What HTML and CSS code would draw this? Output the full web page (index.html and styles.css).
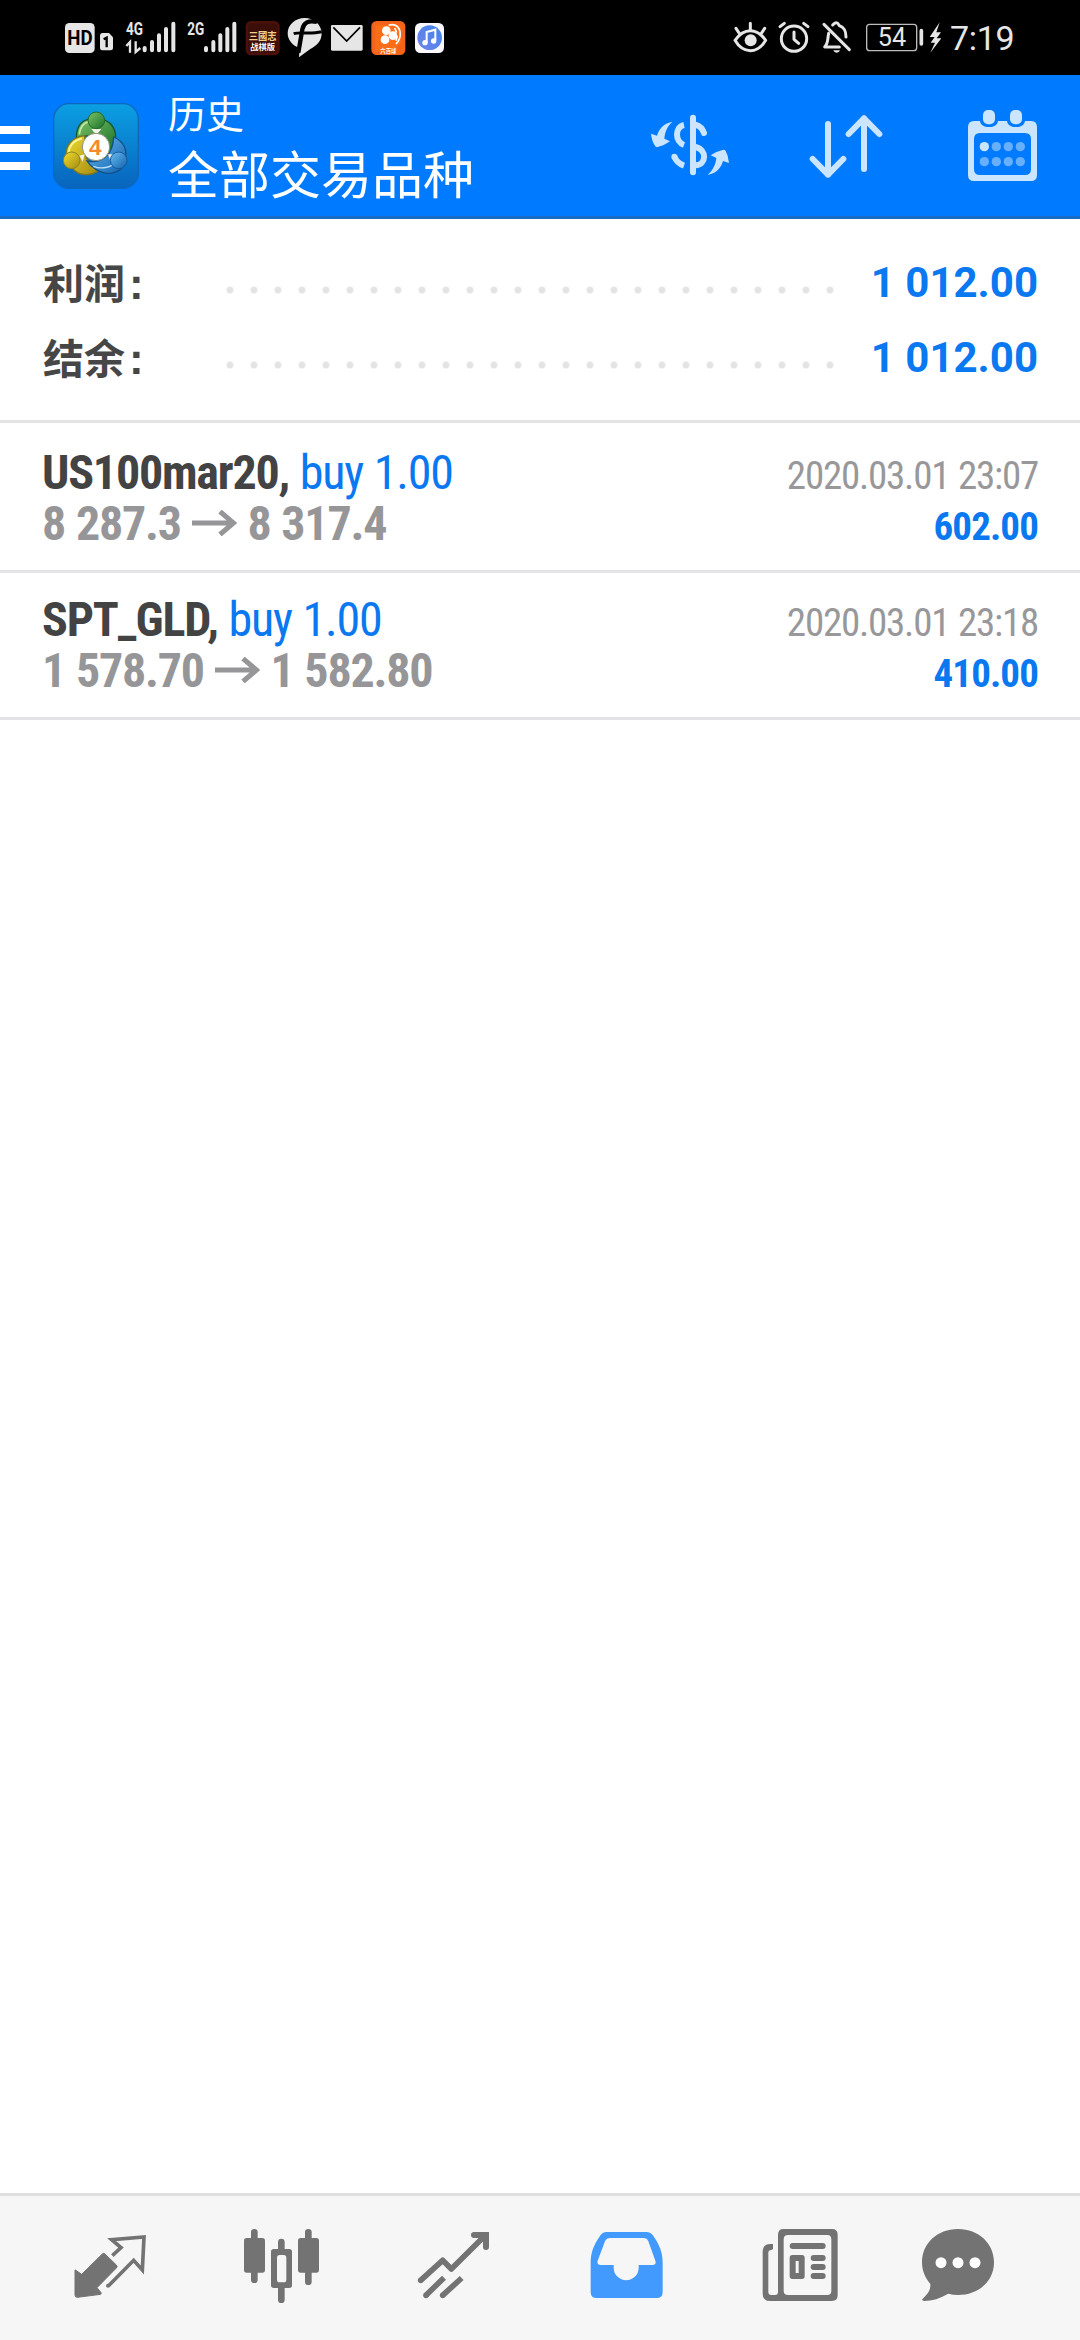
FILE: index.html
```
<!DOCTYPE html>
<html lang="zh-CN">
<head>
<meta charset="utf-8">
<title>历史</title>
<link rel="stylesheet" href="styles.css">
</head>
<body>
<div class="screen">
  <div class="status">
    <div class="status-left">
      <svg width="52" height="75" viewBox="45 0 156 225">
        <rect x="45" y="69" width="89" height="90" rx="13" fill="#e6e6e6"/>
        <text x="90" y="134" class="hd" textLength="76" lengthAdjust="spacingAndGlyphs">HD</text>
        <path d="M158 99h19l12 13v32q0 7-7 7h-25q-7 0-7-7v-37q0-8 8-8z" fill="#e6e6e6"/>
        <path d="M161 118l9-5v29" fill="none" stroke="#000" stroke-width="7"/>
      </svg>
      <svg width="60" height="75" viewBox="222 0 180 225">
        <text x="228" y="106" class="net" textLength="51" lengthAdjust="spacingAndGlyphs">4G</text>
        <path d="M240 158v-32l-11 12M257 124v32l14-12" fill="none" stroke="#e6e6e6" stroke-width="7"/>
        <path d="M284 144v7M306 126v25M327 106v45M348 87v64M370 71v80" class="bars"/>
      </svg>
      <svg width="57" height="75" viewBox="404 0 171 225">
        <text x="411" y="106" class="net" textLength="51" lengthAdjust="spacingAndGlyphs">2G</text>
        <path d="M467 144v7M489 126v25M510 106v45M531 87v64M552 71v80" class="bars"/>
      </svg>
      <svg width="36" height="75" viewBox="16 0 108 225">
        <rect x="18" y="63" width="102" height="103" rx="16" fill="#4c100b"/>
        <rect x="25" y="70" width="88" height="88" rx="12" fill="#3b0f08"/>
        <text x="69" y="119" class="game-a" textLength="84" lengthAdjust="spacingAndGlyphs">三國志</text>
        <text x="69" y="150" class="game-b" textLength="74" lengthAdjust="spacingAndGlyphs">战棋版</text>
      </svg>
      <svg width="37" height="75" viewBox="142 0 111 225">
        <path d="M195 54c28 0 51 21 51 46 0 24-16 38-34 47l-34 25 2-28c-21-6-36-24-36-44 0-26 23-46 51-46z" fill="#e6e6e6"/>
        <path d="M232 66c-26-6-40 2-44 22l-12 70" fill="none" stroke="#000" stroke-width="13"/>
        <path d="M162 101c20-6 50 2 84-6" fill="none" stroke="#000" stroke-width="9"/>
      </svg>
      <svg width="42" height="75" viewBox="262 0 126 225">
        <rect x="274" y="75" width="95" height="77" rx="4" fill="#e6e6e6"/>
        <path d="M281 82l40 41 40-41" fill="none" stroke="#000" stroke-width="5"/>
      </svg>
      <svg width="40" height="75" viewBox="392 0 120 225">
        <rect x="396" y="63" width="102" height="102" rx="16" fill="#f4631a"/>
        <path d="M408 76h78v54l-30 26h-48z" fill="#ff7a16" opacity=".5"/>
        <g fill="#fff"><circle cx="441" cy="92" r="13"/><circle cx="437" cy="119" r="13"/><circle cx="461" cy="107" r="13"/></g>
        <path d="M448 76q26-8 34 18 4 22-12 38M466 84l6 14M474 108l-4 14" fill="none" stroke="#fff" stroke-width="5"/>
        <text x="447" y="159" class="ball">六百球</text>
      </svg>
      <svg width="32" height="75" viewBox="524 0 96 225">
        <defs><linearGradient id="mus" x1="0" y1="1" x2="1" y2="0"><stop offset="0" stop-color="#7183e6"/><stop offset="1" stop-color="#3f86ef"/></linearGradient></defs>
        <rect x="527" y="69" width="87" height="90" rx="16" fill="#fbf8ff"/>
        <circle cx="571" cy="113" r="37" fill="url(#mus)"/>
        <path d="M562 128V96l26-7v32" fill="none" stroke="#fff" stroke-width="6"/>
        <circle cx="557" cy="128" r="8" fill="#fff"/><circle cx="583" cy="123" r="8" fill="#fff"/>
      </svg>
    </div>
    <div class="status-right">
      <svg width="42" height="75" viewBox="30 0 126 225">
        <path d="M45 121q20-29 46-29t46 29q-18 31-46 31t-46-31z" class="line"/>
        <circle cx="92" cy="121" r="18" fill="#e6e6e6"/>
        <path d="M91 70v20M48 85l10 15M134 85l-10 15" class="line"/>
      </svg>
      <svg width="42" height="75" viewBox="162 0 126 225">
        <circle cx="222" cy="116" r="38" class="line"/>
        <path d="M222 96v22l14 12M180 80l13-10M264 80l-13-10" class="line"/>
      </svg>
      <svg width="38" height="75" viewBox="292 0 114 225">
        <path d="M310 73l76 76M324 100c-4 16 0 28-12 41h44M336 75q12-14 20 2c16 6 20 16 20 34" class="line"/>
        <path d="M338 151h20q-2 7-10 7t-10-7z" fill="#e6e6e6"/>
      </svg>
      <svg width="79" height="75" viewBox="426 0 237 225">
        <rect x="440" y="73" width="150" height="79" rx="9" fill="none" stroke="#bdbdbd" stroke-width="4"/>
        <text x="516" y="138" class="batt" textLength="85" lengthAdjust="spacingAndGlyphs">54</text>
        <path d="M604 92v40" stroke="#e6e6e6" stroke-width="11" stroke-linecap="round"/>
        <path d="M659 67l-30 44h15l-12 17h13l-14 30 33-43h-14l13-18h-14z" fill="#e6e6e6"/>
      </svg>
      <span class="clock">7:19</span>
    </div>
  </div>

  <header class="header">
    <div class="menu"><i></i><i></i><i></i></div>
    <svg class="logo" width="86" height="86" viewBox="159 102 258 258">
      <defs>
        <linearGradient id="bg" x1="0" y1="0" x2="0" y2="1"><stop offset="0" stop-color="#0b9fe2"/><stop offset="1" stop-color="#0864bd"/></linearGradient>
        <linearGradient id="gr" x1="0" y1="0" x2="1" y2="1"><stop offset="0" stop-color="#7fc466"/><stop offset="1" stop-color="#177029"/></linearGradient>
        <linearGradient id="ye" x1="0" y1="0" x2="1" y2="1"><stop offset="0" stop-color="#f0de33"/><stop offset="1" stop-color="#a58a10"/></linearGradient>
        <linearGradient id="bl" x1="0" y1="0" x2="1" y2="1"><stop offset="0" stop-color="#6dbcf0"/><stop offset="1" stop-color="#0f62b0"/></linearGradient>
      </defs>
      <rect x="161" y="104" width="254" height="254" rx="46" fill="url(#bg)" stroke="#0d68bd" stroke-width="4"/>
      <path d="M229 206c0-40 20-58 58-58s60 24 60 58c0 20-8 34-18 42l-38-52z" fill="url(#gr)" stroke="#14592f" stroke-width="4"/>
      <path d="M238 196c2-22 12-34 28-38" fill="none" stroke="#c3e8ac" stroke-width="5"/>
      <path d="M254 200c-38 4-58 30-56 62l20 36c16 22 50 24 74 10l-34-42z" fill="url(#ye)" stroke="#7b7620" stroke-width="4"/>
      <path d="M246 208c-24 6-38 22-40 42" fill="none" stroke="#fbf59a" stroke-width="5"/>
      <path d="M341 204c32 14 42 40 34 74-6 32-46 42-74 30-18-8-32-20-40-32 38 8 78-12 80-72z" fill="url(#bl)" stroke="#12508a" stroke-width="4"/>
      <path d="M280 292c24 10 52 4 70-14" fill="none" stroke="#b4defa" stroke-width="4"/>
      <path d="M274 180h30l-15 18zM238 260l16-4-6 22zM324 256h16l-8 22z" fill="#f4f4e8"/>
      <circle cx="289" cy="154" r="25" fill="url(#gr)" stroke="#1f6c2c" stroke-width="3"/>
      <circle cx="215" cy="274" r="25" fill="url(#ye)" stroke="#8a8420" stroke-width="3"/>
      <circle cx="356" cy="274" r="25" fill="url(#bl)" stroke="#14599a" stroke-width="3"/>
      <circle cx="288" cy="234" r="41" fill="#fff" stroke="#8d8d78" stroke-width="3"/>
      <text x="286" y="259" class="four">4</text>
    </svg>
    <div class="titles">
      <div class="title">历史</div>
      <div class="subtitle">全部交易品种</div>
    </div>
    <svg class="tool" width="460" height="141" viewBox="0 -15 1380 423">
      <g fill="#cce5ff">
        <path d="M157 125c-28 6-40 22-46 42l-18-6q2 22 13 38 2 3 7 2 20-4 37-17l-17-8c2-20 8-36 24-51z"/>
        <path d="M263 285c28-6 40-22 46-42l18 6q-2-22-10-36-3-5-9-3-20 4-36 16l17 8c-2 20-10 36-26 51z"/>
        <circle cx="163" cy="230" r="9"/>
      </g>
      <g fill="none" stroke="#cce5ff" stroke-width="18">
        <path d="M219 113v164" stroke-linecap="round"/>
        <path d="M192 135c-28 6-28 50 0 60M163 230q8 20 29 27"/>
        <path d="M226 134q20 6 26 25" stroke-linecap="round"/>
        <path d="M226 201c36 8 34 54 0 55"/>
      </g>
      <g fill="none" stroke="#cce5ff" stroke-width="18" stroke-linecap="round" stroke-linejoin="round">
        <path d="M624 132v152M578 237l46 47 46-47M732 267V115M686 162l46-47 46 47"/>
      </g>
      <path fill="#cce5ff" fill-rule="evenodd" d="M1062 123h18c2 12 12 18 27 18s25-6 27-18h27c2 12 12 18 27 18s25-6 27-18h18q18 0 18 18v144q0 18-18 18h-171q-18 0-18-18V141q0-18 18-18zM1080 159q-18 0-18 18v90q0 18 18 18h135q18 0 18-18v-90q0-18-18-18z"/>
      <g fill="#cce5ff"><rect x="1089" y="90" width="36" height="43" rx="15"/><rect x="1170" y="90" width="36" height="43" rx="15"/><circle cx="1093" cy="200" r="14"/></g>
      <g fill="#66b0ff"><circle cx="1129" cy="200" r="14"/><circle cx="1165" cy="200" r="14"/><circle cx="1201" cy="200" r="14"/><circle cx="1093" cy="245" r="14"/><circle cx="1129" cy="245" r="14"/><circle cx="1165" cy="245" r="14"/><circle cx="1201" cy="245" r="14"/></g>
    </svg>
  </header>

  <section class="summary">
    <div class="sum-row"><span class="label">利润<b>:</b></span><span class="dots"></span><span class="total">1 012.00</span></div>
    <div class="sum-row"><span class="label">结余<b>:</b></span><span class="dots"></span><span class="total">1 012.00</span></div>
  </section>

  <main class="deals">
    <article class="deal">
      <div class="line1"><span class="deal-name"><b>US100mar20,</b> <em>buy 1.00</em></span><span class="time">2020.03.01 23:07</span></div>
      <div class="line2"><span class="prices">8 287.3 <svg width="45" height="26" viewBox="0 0 45 26"><path d="M0 13h41M28 1.500l13.500 11.500L28 24.500" /></svg> 8 317.4</span><span class="profit">602.00</span></div>
    </article>
    <article class="deal">
      <div class="line1"><span class="deal-name"><b>SPT_GLD,</b> <em>buy 1.00</em></span><span class="time">2020.03.01 23:18</span></div>
      <div class="line2"><span class="prices">1 578.70 <svg width="45" height="26" viewBox="0 0 45 26"><path d="M0 13h41M28 1.500l13.500 11.500L28 24.500" /></svg> 1 582.80</span><span class="profit">410.00</span></div>
    </article>
  </main>

  <nav class="nav">
    <svg viewBox="-48 48 516 432">
      <path d="M106 270l19 13 62-61q4-4 8 0l34 33q5 5 0 9l-58 59 13 16-2 4-70 9q-7 0-7-7v-75z" fill="#737373" stroke="#737373" stroke-width="3" stroke-linejoin="round"/>
      <path d="M217 227l26-24-28-24 97-8-5 99-26-29-76 77" fill="none" stroke="#737373" stroke-width="11"/><circle cx="204" cy="317" r="6" fill="#737373"/>
    </svg>
    <svg viewBox="468 48 516 432">
      <g fill="#737373"><rect x="612" y="174" width="63" height="104" rx="8"/><rect x="774" y="174" width="63" height="104" rx="8"/><rect x="633" y="147" width="20" height="162" rx="10"/><rect x="795" y="147" width="20" height="168" rx="10"/><rect x="714" y="176" width="20" height="40" rx="10"/><rect x="714" y="312" width="20" height="57" rx="10"/>
      <path fill-rule="evenodd" d="M701 207h47q8 0 8 8v101q0 8-8 8h-47q-8 0-8-8V215q0-8 8-8zM719 225q-8 0-8 8v66q0 8 8 8h12q8 0 8-8v-66q0-8-8-8z"/></g>
    </svg>
    <svg viewBox="-36 48 516 432">
      <g fill="none" stroke="#737373" stroke-width="17">
        <path d="M122 301l66-60 26 26L316 166" stroke-linejoin="round"/><path d="M282 165h36v36" stroke-width="18" stroke-linecap="round"/><path d="M138 346l54-53M188 346l57-52"/>
      </g><g fill="#737373"><circle cx="122" cy="301" r="8.500"/><circle cx="138" cy="346" r="8.500"/><circle cx="188" cy="346" r="8.500"/><path d="M300 156h27v27z"/></g>
    </svg>
    <svg viewBox="480 48 516 432">
      <path fill="#429aff" fill-rule="evenodd" d="M680 156h119q12 0 19 9c22 30 30 55 30 83v88q0 18-18 18H650q-18 0-18-18v-88c0-28 8-53 30-83q6-9 18-9zM690 174q-10 0-15 10l-22 58q-3 13 9 13h39v8a37 37 0 0 0 75 0v-8h42q12 0 8-13l-21-58q-4-10-15-10z"/>
    </svg>
    <svg viewBox="-24 48 516 432">
      <path fill="#737373" fill-rule="evenodd" d="M190 147h146q17 0 17 17v182q0 17-17 17H151q-23 0-23-22V215q0-22 22-23h9v15l-5 3q-9 0-9 8v118q0 9 9 9h11q9 0 9-9V164q0-17 16-17zM204 165q-13 0-13 13v154q0 13 13 13h118q12 0 12-13V178q0-13-12-13z"/>
      <path fill="#737373" fill-rule="evenodd" d="M217 225h29q8 0 8 8v56q0 8-8 8h-29q-8 0-8-8v-56q0-8 8-8zM227 243v36h9v-36z"/>
      <path d="M218 198h90M281 234h27M281 261h27M281 288h27" stroke="#737373" stroke-width="18" stroke-linecap="round"/>
    </svg>
    <svg viewBox="492 48 516 432">
      <path fill="#737373" d="M714 147c62 0 108 43 108 100s-46 98-108 98q-15 0-29-4c-24 14-48 22-73 22q-8-1-4-7c18-16 24-28 23-44-16-19-25-40-25-65 0-57 46-100 108-100z"/>
      <g fill="#fff"><circle cx="663" cy="248" r="16.500"/><circle cx="714" cy="248" r="16.500"/><circle cx="765" cy="248" r="16.500"/></g>
    </svg>
  </nav>
</div>
</body>
</html>
```
FILE: styles.css
```
* { box-sizing: border-box; }
body { margin: 0; background: #fff; font-family: Roboto, "Noto Sans CJK SC", sans-serif; }
svg { display: block; flex: none; }
.screen { width: 1080px; height: 2340px; display: flex; flex-direction: column; overflow: hidden; }

.status { height: 75px; background: #000; color: #e6e6e6; display: flex; justify-content: space-between; padding: 0 66px 0 65px; }
.status-left, .status-right { display: flex; }
.status-left svg:nth-child(1) { margin-right: 7px; }
.status-left svg:nth-child(2) { margin-right: 1px; }
.status-left svg:nth-child(3) { margin-right: 3px; }
.status-left svg:nth-child(4) { margin-right: 6px; }
.status-left svg:nth-child(5) { margin-right: 3px; }
.status-left svg:nth-child(6) { margin-right: 1px; }
.status-left svg:nth-child(7) { margin-right: 4px; }
.status-right { width: 284px; gap: 2px; white-space: nowrap; }
.status-right svg:nth-child(3) { margin-right: 4px; }
.hd { font: bold 59px Roboto, sans-serif; text-anchor: middle; fill: #000; }
.net { font: bold 54px Roboto, sans-serif; fill: #e6e6e6; }
.bars { stroke: #e6e6e6; stroke-width: 12; stroke-linecap: round; fill: none; }
.game-a { font: bold 32px "Noto Sans CJK TC", sans-serif; text-anchor: middle; fill: #f0cf8d; }
.game-b { font: bold 23px "Noto Sans CJK SC", sans-serif; text-anchor: middle; fill: #fff; }
.ball { font: bold 16px "Noto Sans CJK SC", sans-serif; text-anchor: middle; fill: #fff; }
.line { fill: none; stroke: #e6e6e6; stroke-width: 9; stroke-linecap: round; stroke-linejoin: round; }
.batt { font: 78px Roboto, sans-serif; text-anchor: middle; fill: #e6e6e6; }
.clock { font-size: 34px; line-height: 76px; margin-left: 7px; letter-spacing: -0.3px; }

.header { height: 144px; background: #007aff; border-bottom: 3px solid #176bc4; display: flex; align-items: center; color: #fff; }
.menu { width: 30px; margin-right: 23px; padding-top: 5px; display: flex; flex-direction: column; gap: 10px; }
.menu i { height: 8px; background: #fff; }
.titles { width: 450px; padding: 1px 0 0 29px; font-family: "Noto Sans CJK SC", sans-serif; }
.title { font-size: 38px; line-height: 52px; }
.subtitle { font-size: 51px; line-height: 68px; }
.tool { margin-left: 31px; }
.four { font: bold 68px "Liberation Sans", sans-serif; text-anchor: middle; fill: #f58a2c; }

.summary { height: 204px; padding: 26px 42px 0 43px; border-bottom: 3px solid #e3e3e5; }
.sum-row { height: 75px; display: flex; align-items: center; font-weight: bold; }
.label { width: 175px; padding-bottom: 3px; font: bold 41px/72px "Noto Sans CJK SC", sans-serif; color: #464646; }
.label b { font-family: "Liberation Sans", sans-serif; font-size: 44px; line-height: 0; margin-left: 4px; }
.dots { width: 624px; height: 8px; margin-top: 15px; background: radial-gradient(circle at 12px 4px, #e4e4e4 3px, transparent 4px) 0 0 / 24px 8px; }
.total { flex: 1; text-align: right; font-size: 42px; color: #0a78f0; white-space: nowrap; }

.deals { flex: 1; padding-top: 3px; font-family: Roboto, sans-serif; font-stretch: 75%; }
.deal { height: 147px; padding: 21px 42px 0; border-bottom: 3px solid #e3e3e5; }
.line1, .line2 { height: 51px; display: flex; justify-content: space-between; align-items: baseline; line-height: 51px; white-space: nowrap; letter-spacing: -1.22px; word-spacing: 1px; }
.deal-name, .prices { font-size: 48px; }
.deal-name b { color: #434343; }
.deal-name em { font-style: normal; color: #0a78f0; }
.prices { font-weight: bold; color: #969699; }
.prices svg { display: inline-block; vertical-align: 4px; }
.prices path { fill: none; stroke: #969699; stroke-width: 5; }
.time { font-size: 39px; color: #98989b; }
.profit { font-size: 39px; font-weight: bold; color: #0a78f0; letter-spacing: -0.9px; }

.nav { height: 147px; border-top: 3px solid #dfdfdf; background: #f6f6f6; padding: 0 24px; display: flex; }
.nav svg { width: 172px; height: 144px; }
```
